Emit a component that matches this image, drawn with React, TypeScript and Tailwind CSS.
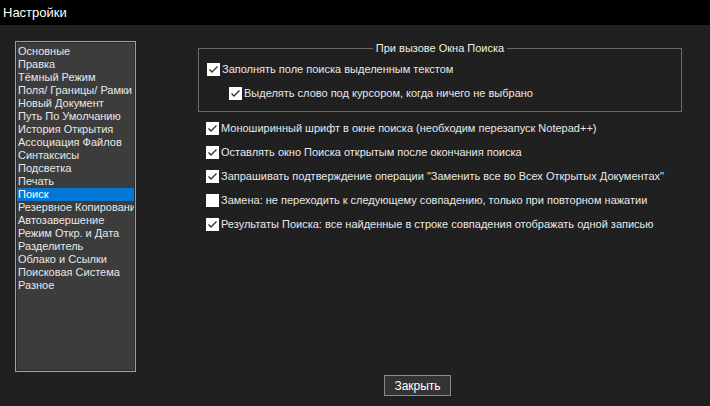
import React from 'react';

const pages = [
  'Основные',
  'Правка',
  'Тёмный Режим',
  'Поля/ Границы/ Рамки',
  'Новый Документ',
  'Путь По Умолчанию',
  'История Открытия',
  'Ассоциация Файлов',
  'Синтаксисы',
  'Подсветка',
  'Печать',
  'Поиск',
  'Резервное Копирование',
  'Автозавершение',
  'Режим Откр. и Дата',
  'Разделитель',
  'Облако и Ссылки',
  'Поисковая Система',
  'Разное',
];

const options = [
  { label: 'Моноширинный шрифт в окне поиска (необходим перезапуск Notepad++)', checked: true },
  { label: 'Оставлять окно Поиска открытым после окончания поиска', checked: true },
  { label: 'Запрашивать подтверждение операции "Заменить все во Всех Открытых Документах"', checked: true },
  { label: 'Замена: не переходить к следующему совпадению, только при повторном нажатии', checked: false },
  { label: 'Результаты Поиска: все найденные в строке совпадения отображать одной записью', checked: true },
];

function CheckBox({ checked }: { checked: boolean }) {
  return (
    <div className="w-[13px] h-[13px] shrink-0 bg-white flex items-center justify-center">
      {checked && (
        <svg width="13" height="13" viewBox="0 0 13 13">
          <polyline points="2.5,6.5 5,9 10.5,3.5" fill="none" stroke="#333" strokeWidth="1.4" />
        </svg>
      )}
    </div>
  );
}

function Option({ label, checked }: { label: string; checked: boolean }) {
  return (
    <div className="flex items-center gap-[2px] h-[13px]">
      <CheckBox checked={checked} />
      <span className="whitespace-nowrap">{label}</span>
    </div>
  );
}

export default function App() {
  const selected = 'Поиск';

  return (
    <div
      className="w-[710px] h-[406px] bg-[#202020] text-[#e8e8e8] text-[11px] flex flex-col overflow-hidden"
      style={{ fontFamily: '"Liberation Sans", Arial, sans-serif' }}
    >
      <div className="h-[25px] bg-black flex items-center px-[3px] text-[13px] text-white shrink-0">
        Настройки
      </div>

      <div className="flex flex-1 relative">
        {/* page list */}
        <div className="ml-[15px] mt-[16px] w-[121px] h-[331px] border border-[#a0a0a0]">
          <div className="w-full h-full border border-[#2a2a2a] bg-[#3c3c3c] pt-[2px] overflow-hidden">
            {pages.map(p => (
              <div
                key={p}
                className={`h-[13px] leading-[13px] pl-[1px] whitespace-nowrap overflow-hidden ${p === selected ? 'bg-[#0078d7] text-white' : ''}`}
              >
                {p}
              </div>
            ))}
          </div>
        </div>

        {/* search options */}
        <div className="ml-[62px] mt-[23px] flex flex-col">
          <div className="relative w-[484px] h-[64px] border border-[#6a6a6a] pl-[8px] pt-[14px] flex flex-col gap-[11px]">
            <div className="absolute left-0 right-0 top-[-7px] flex justify-center">
              <span className="bg-[#202020] px-[3px] leading-[13px] text-[#f0f0e6]">При вызове Окна Поиска</span>
            </div>
            <Option label="Заполнять поле поиска выделенным текстом" checked />
            <div className="pl-[22px]">
              <Option label="Выделять слово под курсором, когда ничего не выбрано" checked />
            </div>
          </div>

          <div className="mt-[10px] flex flex-col gap-[11px] pl-[8px]">
            {options.map(o => (
              <Option key={o.label} label={o.label} checked={o.checked} />
            ))}
          </div>
        </div>

        <button className="absolute left-[384px] top-[350px] w-[67px] h-[21px] bg-[#333] border border-[#8a8a8a] text-white text-[12px] leading-none">
          Закрыть
        </button>
      </div>
    </div>
  );
}
